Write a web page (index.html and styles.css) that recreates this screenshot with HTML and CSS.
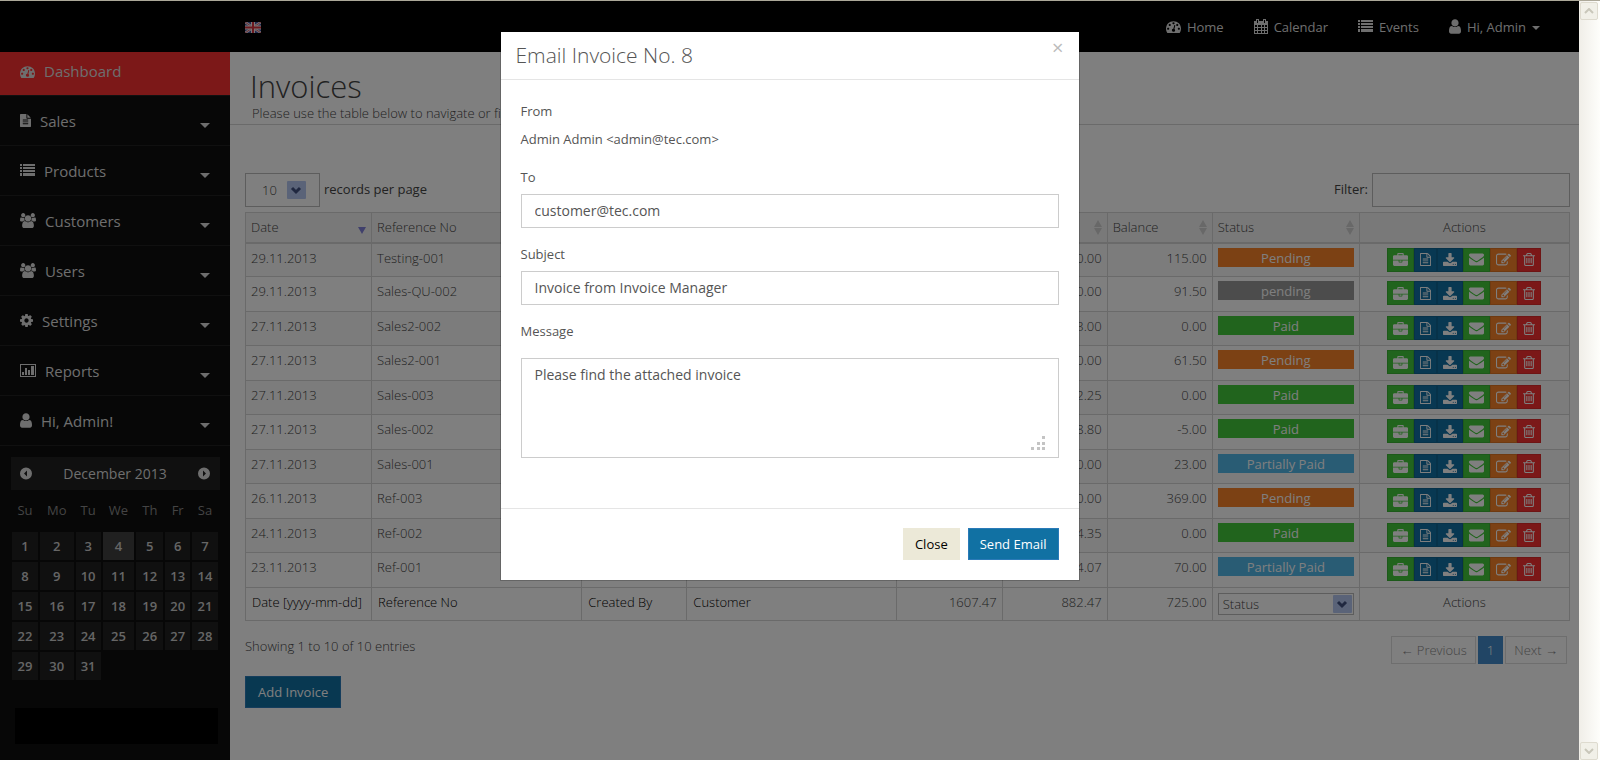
FILE: index.html
```html
<!DOCTYPE html>
<html lang="en">
<head>
    <meta charset="UTF-8">
    <meta name="viewport" content="width=device-width, initial-scale=1.0">
    <title>Invoices - Invoice Manager</title>
    <link rel="stylesheet" href="styles.css">
</head>
<body>

    <!-- Icon set -->
    <svg class="sprite" aria-hidden="true">
        <symbol id="i-dashboard" viewBox="0 0 1792 1792"><path d="M384 1152q0-53-37.500-90.500t-90.500-37.500-90.500 37.500-37.500 90.500 37.500 90.500 90.500 37.500 90.500-37.500 37.500-90.500zm192-448q0-53-37.500-90.500t-90.500-37.500-90.500 37.500-37.500 90.500 37.500 90.500 90.500 37.500 90.500-37.500 37.500-90.500zm428 481l101-382q6-26-7.500-48.500t-38.500-29.500-48 6.500-30 39.500l-101 382q-60 5-107 43.500t-63 98.500q-20 77 20 146t117 89 146-20 89-117q16-60-6-117t-72-91zm660-33q0-53-37.500-90.500t-90.500-37.500-90.500 37.500-37.500 90.500 37.500 90.500 90.500 37.500 90.500-37.500 37.500-90.500zm-640-640q0-53-37.500-90.500t-90.500-37.500-90.500 37.500-37.500 90.500 37.500 90.500 90.500 37.500 90.500-37.500 37.500-90.500zm448 192q0-53-37.500-90.500t-90.500-37.500-90.500 37.500-37.500 90.500 37.500 90.500 90.500 37.500 90.500-37.500 37.500-90.500zm320 448q0 261-141 483-19 29-54 29h-1402q-35 0-54-29-141-221-141-483 0-182 71-348t191-286 286-191 348-71 348 71 286 191 191 286 71 348z"/></symbol>
        <symbol id="i-file" viewBox="128 0 1536 1792"><path d="M1596 476q14 14 28 36h-472v-472q22 14 36 28zm-476 164h544v1056q0 40-28 68t-68 28h-1344q-40 0-68-28t-28-68v-1600q0-40 28-68t68-28h800v544q0 40 28 68t68 28zm160 736v-64q0-14-9-23t-23-9h-704q-14 0-23 9t-9 23v64q0 14 9 23t23 9h704q14 0 23-9t9-23zm0-256v-64q0-14-9-23t-23-9h-704q-14 0-23 9t-9 23v64q0 14 9 23t23 9h704q14 0 23-9t9-23zm0-256v-64q0-14-9-23t-23-9h-704q-14 0-23 9t-9 23v64q0 14 9 23t23 9h704q14 0 23-9t9-23z"/></symbol>
        <symbol id="i-file-o" viewBox="128 0 1536 1792"><path d="M1596 380q28 28 48 76t20 88v1152q0 40-28 68t-68 28h-1344q-40 0-68-28t-28-68v-1600q0-40 28-68t68-28h896q40 0 88 20t76 48zm-444-244v376h376q-10-29-22-41l-313-313q-12-12-41-22zm384 1528v-1024h-416q-40 0-68-28t-28-68v-416h-768v1536h1280zm-1024-864q0-14 9-23t23-9h704q14 0 23 9t9 23v64q0 14-9 23t-23 9h-704q-14 0-23-9t-9-23v-64zm736 224q14 0 23 9t9 23v64q0 14-9 23t-23 9h-704q-14 0-23-9t-9-23v-64q0-14 9-23t23-9h704zm0 256q14 0 23 9t9 23v64q0 14-9 23t-23 9h-704q-14 0-23-9t-9-23v-64q0-14 9-23t23-9h704z"/></symbol>
        <symbol id="i-list" viewBox="0 0 15 13"><path d="M0 0h2v2H0zM3 0h12v2H3zM0 3h2v2H0zM3 3h12v2H3zM0 6h2v2H0zM3 6h12v2H3zM0 9h2v3H0zM3 9h12v3H3z"/></symbol>
        <symbol id="i-users" viewBox="0 0 1920 1792"><path d="M593 896q-162 5-265 128h-134q-82 0-138-40.500t-56-118.500q0-353 124-353 6 0 43.500 21t97.500 42.500 119 21.500q67 0 133-23-5 37-5 66 0 139 81 256zm1071 637q0 120-73 189.500t-194 69.500h-874q-121 0-194-69.500t-73-189.500q0-53 3.500-103.500t14-109 26.500-108.500 43-97.500 62-81 85.500-53.500 111.500-20q10 0 43 21.500t73 48 107 48 135 21.500 135-21.500 107-48 73-48 43-21.500q61 0 111.500 20t85.500 53.500 62 81 43 97.500 26.500 108.500 14 109 3.500 103.500zm-1024-1277q0 106-75 181t-181 75-181-75-75-181 75-181 181-75 181 75 75 181zm704 384q0 159-112.500 271.500t-271.500 112.500-271.500-112.500-112.500-271.500 112.500-271.500 271.500-112.500 271.500 112.500 112.500 271.500zm576 225q0 78-56 118.500t-138 40.500h-134q-103-123-265-128 81-117 81-256 0-29-5-66 66 23 133 23 59 0 119-21.500t97.500-42.500 43.500-21q124 0 124 353zm-128-609q0 106-75 181t-181 75-181-75-75-181 75-181 181-75 181 75 75 181z"/></symbol>
        <symbol id="i-gear" viewBox="128 128 1536 1536"><path d="M1152 896q0-106-75-181t-181-75-181 75-75 181 75 181 181 75 181-75 75-181zm512-109v222q0 12-8 23t-20 13l-185 28q-19 54-39 91 35 50 107 138 10 12 10 25t-9 23q-27 37-99 108t-94 71q-12 0-26-9l-138-108q-44 23-91 38-16 136-29 186-7 28-36 28h-222q-14 0-24.500-8.500t-11.500-21.500l-28-184q-49-16-90-37l-141 107q-10 9-25 9-14 0-25-11-126-114-165-168-7-10-7-23 0-12 8-23 15-21 51-66.500t54-70.500q-27-50-41-99l-183-27q-13-2-21-12.500t-8-23.500v-222q0-12 8-23t19-13l186-28q14-46 39-92-40-57-107-138-10-12-10-24 0-10 9-23 26-36 98.500-107.500t94.500-71.500q13 0 26 10l138 107q44-23 91-38 16-136 29-186 7-28 36-28h222q14 0 24.500 8.500t11.500 21.500l28 184q49 16 90 37l142-107q9-9 24-9 13 0 25 10 129 119 165 170 7 8 7 22 0 12-8 23-15 21-51 66.500t-54 70.500q26 50 41 98l183 28q13 2 21 12.500t8 23.500z"/></symbol>
        <symbol id="i-chart" viewBox="0 0 16 13"><path d="M0 0h16v13H0zM1 1v11h14V1z" fill-rule="evenodd"/><path d="M2 8h2v3H2zM5 4h2v7H5zM8 6h2v5H8zM11 2h3v9h-3z"/></symbol>
        <symbol id="i-user" viewBox="256 128 1280 1536"><path d="M1536 1399q0 109-62.500 187t-150.500 78h-854q-88 0-150.500-78t-62.500-187q0-85 8.500-160.500t31.500-152 58.500-131 94-89 134.500-34.500q131 128 313 128t313-128q76 0 134.500 34.500t94 89 58.500 131 31.500 152 8.500 160.500zm-256-887q0 159-112.500 271.500t-271.500 112.500-271.500-112.500-112.500-271.500 112.500-271.500 271.500-112.500 271.500 112.500 112.500 271.500z"/></symbol>
        <symbol id="i-calendar" viewBox="0 0 14 15"><path d="M0 2h2V0h3v2h4V0h3v2h2v13H0zM1 6v2h2V6zM4 6v2h3V6zM8 6v2h2V6zM11 6v2h2V6zM1 9v2h2V9zM4 9v2h3V9zM8 9v2h2V9zM11 9v2h2V9zM1 12v2h2v-2zM4 12v2h3v-2zM8 12v2h2v-2zM11 12v2h2v-2zM3 1v3h1V1zM10 1v3h1V1z" fill-rule="evenodd"/></symbol>
        <symbol id="i-prev" viewBox="0 0 12 12"><path d="M6 0a6 6 0 1 0 0 12a6 6 0 0 0 0-12zM7 3v6L4 6z" fill-rule="evenodd"/></symbol>
        <symbol id="i-next" viewBox="0 0 12 12"><path d="M6 0a6 6 0 1 0 0 12a6 6 0 0 0 0-12zM5 3v6l3-3z" fill-rule="evenodd"/></symbol>
        <symbol id="i-briefcase" viewBox="0 0 1792 1536"><path d="M640 256h512v-128h-512v128zm1152 640v480q0 66-47 113t-113 47h-1472q-66 0-113-47t-47-113v-480h672v160q0 26 19 45t45 19h320q26 0 45-19t19-45v-160h672zm-768 0v128h-256v-128h256zm768-480v384h-1792v-384q0-66 47-113t113-47h352v-160q0-40 28-68t68-28h576q40 0 68 28t28 68v160h352q66 0 113 47t47 113z"/></symbol>
        <symbol id="i-download" viewBox="64 0 1664 1536"><path d="M1344 1344q0-26-19-45t-45-19-45 19-19 45 19 45 45 19 45-19 19-45zm256 0q0-26-19-45t-45-19-45 19-19 45 19 45 45 19 45-19 19-45zm128-224v320q0 40-28 68t-68 28h-1472q-40 0-68-28t-28-68v-320q0-40 28-68t68-28h465l135 136q58 56 136 56t136-56l136-136h464q40 0 68 28t28 68zm-325-569q17 41-14 70l-448 448q-18 19-45 19t-45-19l-448-448q-31-29-14-70 17-39 59-39h256v-448q0-26 19-45t45-19h256q26 0 45 19t19 45v448h256q42 0 59 39z"/></symbol>
        <symbol id="i-envelope" viewBox="0 256 1792 1408"><path d="M1792 710v794q0 66-47 113t-113 47h-1472q-66 0-113-47t-47-113v-794q44 49 101 87 362 246 497 345 57 42 92.500 65.500t94.500 48 110 24.500h2q51 0 110-24.500t94.500-48 92.500-65.500q170-123 498-345 57-39 100-87zm0-294q0 79-49 151t-122 123q-376 261-468 325-10 7-42.500 31t-54 38.500-52 32.500-57.500 27-50 9h-2q-23 0-50-9t-57.500-27-52-32.500-54-38.500-42.500-31q-91-64-262-182.500t-205-142.500q-62-42-117-115.500t-55-136.500q0-78 41.500-130t118.500-52h1472q65 0 112.500 47t47.500 113z"/></symbol>
        <symbol id="i-edit" viewBox="0 128 1792 1408"><path d="M888 1184l116-116-152-152-116 116v56h96v96h56zm440-720q-16-16-33 1l-350 350q-17 17-1 33t33-1l350-350q17-17 1-33zm80 594v190q0 119-84.500 203.500t-203.500 84.500h-832q-119 0-203.500-84.500t-84.500-203.500v-832q0-119 84.500-203.500t203.500-84.500h832q63 0 117 25 15 7 18 23 3 17-9 29l-49 49q-14 14-32 8-23-6-45-6h-832q-66 0-113 47t-47 113v832q0 66 47 113t113 47h832q66 0 113-47t47-113v-126q0-13 9-22l64-64q15-15 35-7t20 29zm-96-738l288 288-672 672h-288v-288zm444 132l-92 92-288-288 92-92q28-28 68-28t68 28l152 152q28 28 28 68t-28 68z"/></symbol>
        <symbol id="i-trash" viewBox="192 128 1408 1536"><path d="M704 736v576q0 14-9 23t-23 9h-64q-14 0-23-9t-9-23v-576q0-14 9-23t23-9h64q14 0 23 9t9 23zm256 0v576q0 14-9 23t-23 9h-64q-14 0-23-9t-9-23v-576q0-14 9-23t23-9h64q14 0 23 9t9 23zm256 0v576q0 14-9 23t-23 9h-64q-14 0-23-9t-9-23v-576q0-14 9-23t23-9h64q14 0 23 9t9 23zm128 724v-948h-896v948q0 22 7 40.500t14.500 27 10.500 8.500h832q3 0 10.500-8.500t14.500-27 7-40.500zm-672-1076h448l-48-117q-7-9-17-11h-317q-10 2-17 11zm928 32v64q0 14-9 23t-23 9h-96v948q0 83-47 143.500t-113 60.500h-832q-66 0-113-58.500t-47-141.500v-952h-96q-14 0-23-9t-9-23v-64q0-14 9-23t23-9h309l70-167q15-37 54-63t79-26h320q40 0 79 26t54 63l70 167h309q14 0 23 9t9 23z"/></symbol>
    </svg>

    <div class="app">
        <header class="navbar">
            <a class="flag" href="#" aria-label="English">
                <svg width="16" height="11" viewBox="0 0 16 11">
                    <rect width="16" height="11" fill="#3c4f9c"/>
                    <path d="M0 0l16 11M16 0L0 11" stroke="#f0e4e8" stroke-width="2.500"/>
                    <path d="M0 0l16 11M16 0L0 11" stroke="#d06070" stroke-width="1"/>
                    <path d="M8 0v11M0 5.500h16" stroke="#f4ecee" stroke-width="4"/>
                    <path d="M8 0v11M0 5.500h16" stroke="#d8303c" stroke-width="2"/>
                </svg>
            </a>
            <nav class="topnav">
                <a href="#"><svg class="icon w15"><use href="#i-dashboard"/></svg>Home</a>
                <a href="#"><svg class="icon w14"><use href="#i-calendar"/></svg>Calendar</a>
                <a href="#"><svg class="icon w15"><use href="#i-list"/></svg>Events</a>
                <a href="#"><svg class="icon w12"><use href="#i-user"/></svg>Hi, Admin<span class="caret small"></span></a>
            </nav>
        </header>

        <div class="layout">
            <aside class="sidebar">
                <nav class="menu">
                    <a class="active" href="#"><svg class="icon w15"><use href="#i-dashboard"/></svg>Dashboard</a>
                    <a href="#"><svg class="icon w11"><use href="#i-file"/></svg>Sales<span class="caret"></span></a>
                    <a href="#"><svg class="icon w15"><use href="#i-list"/></svg>Products<span class="caret"></span></a>
                    <a href="#"><svg class="icon w16"><use href="#i-users"/></svg>Customers<span class="caret"></span></a>
                    <a href="#"><svg class="icon w16"><use href="#i-users"/></svg>Users<span class="caret"></span></a>
                    <a href="#"><svg class="icon w13"><use href="#i-gear"/></svg>Settings<span class="caret"></span></a>
                    <a href="#"><svg class="icon w16"><use href="#i-chart"/></svg>Reports<span class="caret"></span></a>
                    <a href="#"><svg class="icon w12"><use href="#i-user"/></svg>Hi, Admin!<span class="caret"></span></a>
                </nav>

                <div class="datepicker">
                    <div class="datepicker-head">
                        <button type="button" aria-label="Previous month"><svg class="icon w12"><use href="#i-prev"/></svg></button>
                        <span>December 2013</span>
                        <button type="button" aria-label="Next month"><svg class="icon w12"><use href="#i-next"/></svg></button>
                    </div>
                    <table>
                        <thead>
                            <tr>
                                <th class="d26">Su</th>
                                <th class="d34">Mo</th>
                                <th class="d25">Tu</th>
                                <th class="d32">We</th>
                                <th class="d27">Th</th>
                                <th class="d25">Fr</th>
                                <th class="d26">Sa</th>
                            </tr>
                        </thead>
                        <tbody id="days"></tbody>
                    </table>
                </div>
                <div class="sidebox"></div>
            </aside>

            <main class="content">
                <div class="page-head">
                    <h1>Invoices</h1>
                    <p>Please use the table below to navigate or filter the results.</p>
                </div>

                <div class="table-area">
                    <div class="table-tools">
                        <label><select class="length"><option>10</option><option>25</option></select><span>records per page</span></label>
                        <label><span>Filter:</span><input class="filter" type="text"></label>
                    </div>

                    <table class="invoices">
                        <colgroup>
                            <col class="c-date"><col class="c-ref"><col class="c-num"><col class="c-ref"><col class="c-num"><col class="c-num"><col class="c-num"><col class="c-status"><col class="c-ref">
                        </colgroup>
                        <thead>
                            <tr>
                                <th><div class="th">Date<span class="sorted"></span></div></th>
                                <th><div class="th">Reference No<span class="sort"></span></div></th>
                                <th><div class="th">Created By<span class="sort"></span></div></th>
                                <th><div class="th">Customer<span class="sort"></span></div></th>
                                <th><div class="th">Total<span class="sort"></span></div></th>
                                <th><div class="th">Paid<span class="sort"></span></div></th>
                                <th><div class="th">Balance<span class="sort"></span></div></th>
                                <th><div class="th">Status<span class="sort"></span></div></th>
                                <th class="center">Actions</th>
                            </tr>
                        </thead>
                        <tbody id="rows"></tbody>
                        <tfoot>
                            <tr>
                                <td><input type="text" value="Date [yyyy-mm-dd]" aria-label="Date"></td>
                                <td><input type="text" value="Reference No" aria-label="Reference No"></td>
                                <td><input type="text" value="Created By" aria-label="Created By"></td>
                                <td><input type="text" value="Customer" aria-label="Customer"></td>
                                <td class="num">1607.47</td>
                                <td class="num">882.47</td>
                                <td class="num">725.00</td>
                                <td><select class="status-filter" aria-label="Status"><option>Status</option><option>Paid</option><option>Pending</option></select></td>
                                <td class="center">Actions</td>
                            </tr>
                        </tfoot>
                    </table>

                    <div class="table-foot">
                        <span>Showing 1 to 10 of 10 entries</span>
                        <div class="pagination">
                            <a href="#">← Previous</a>
                            <a class="current" href="#">1</a>
                            <a href="#">Next →</a>
                        </div>
                    </div>

                    <button type="button" class="btn btn-primary">Add Invoice</button>
                </div>
            </main>
        </div>

        <div class="backdrop">
            <form class="modal" role="dialog" aria-labelledby="modal-title">
                <div class="modal-header">
                    <h2 id="modal-title">Email Invoice No. 8</h2>
                    <button type="button" class="close" aria-label="Dismiss">×</button>
                </div>
                <div class="modal-body">
                    <span class="label">From</span>
                    <span class="label from">Admin Admin &lt;admin@tec.com&gt;</span>
                    <label for="to">To</label>
                    <input id="to" type="text" value="customer@tec.com">
                    <label for="subject">Subject</label>
                    <input id="subject" type="text" value="Invoice from Invoice Manager">
                    <label for="message" class="message-label">Message</label>
                    <div class="message-box">
                        <textarea id="message">Please find the attached invoice</textarea>
                        <svg class="grip" width="14" height="14" viewBox="0 0 14 14"><path d="M11 0h3v3h-3zM6 6h3v3H6zM11 6h3v3h-3zM0 11h3v3H0zM6 11h3v3H6zM11 11h3v3h-3z"/></svg>
                    </div>
                </div>
                <div class="modal-footer">
                    <button type="button" class="btn btn-close">Close</button>
                    <button type="button" class="btn btn-primary">Send Email</button>
                </div>
            </form>
        </div>
    </div>

    <div class="scrollbar">
        <span class="scroll-btn"><svg width="10" height="6" viewBox="0 0 10 6"><path d="M1 5l4-4 4 4"/></svg></span>
        <span class="scroll-btn"><svg width="10" height="6" viewBox="0 0 10 6"><path d="M1 1l4 4 4-4"/></svg></span>
    </div>

    <script>
        // date, reference, paid, balance, status
        const invoices = [
            ["29.11.2013", "Testing-001", 0, 115, "Pending"],
            ["29.11.2013", "Sales-QU-002", 0, 91.5, "pending"],
            ["27.11.2013", "Sales2-002", 573, 0, "Paid"],
            ["27.11.2013", "Sales2-001", 0, 61.5, "Pending"],
            ["27.11.2013", "Sales-003", 62.25, 0, "Paid"],
            ["27.11.2013", "Sales-002", 58.8, -5, "Paid"],
            ["27.11.2013", "Sales-001", 0, 23, "Partially Paid"],
            ["26.11.2013", "Ref-003", 0, 369, "Pending"],
            ["24.11.2013", "Ref-002", 154.35, 0, "Paid"],
            ["23.11.2013", "Ref-001", 34.07, 70, "Partially Paid"]
        ];

        const statusClass = {
            "Pending": "orange",
            "pending": "grey",
            "Paid": "green",
            "Partially Paid": "sky"
        };

        const actions = [
            ["View", "briefcase", "green", "w15"],
            ["Details", "file-o", "blue", "w11"],
            ["Download", "download", "blue", "w14"],
            ["Email", "envelope", "green", "w15"],
            ["Edit", "edit", "orange", "w15"],
            ["Delete", "trash", "red", "w12"]
        ];

        const buttons = actions.map(([title, icon, color, width]) =>
            `<button type="button" class="${color}" title="${title}"><svg class="icon ${width}"><use href="#i-${icon}"/></svg></button>`
        ).join("");

        document.getElementById("rows").innerHTML = invoices.map(([date, ref, paid, balance, status]) => `
            <tr>
                <td>${date}</td>
                <td>${ref}</td>
                <td>Admin</td>
                <td>Customer</td>
                <td class="num">${(paid + balance).toFixed(2)}</td>
                <td class="num">${paid.toFixed(2)}</td>
                <td class="num">${balance.toFixed(2)}</td>
                <td><span class="status ${statusClass[status]}">${status}</span></td>
                <td><div class="actions">${buttons}</div></td>
            </tr>`).join("");

        // December 2013 starts on a Sunday
        let days = "";
        for (let start = 1; start <= 31; start += 7) {
            days += "<tr>";
            for (let day = start; day < start + 7 && day <= 31; day++) {
                days += `<td class="${day === 4 ? "today" : ""}">${day}</td>`;
            }
            days += "</tr>";
        }
        document.getElementById("days").innerHTML = days;
    </script>

</body>
</html>
```
FILE: styles.css
```css
* {
    box-sizing: border-box;
}

body {
    margin: 0;
    min-height: 100vh;
    display: flex;
    border-top: 1px solid #aca899;
    font-family: "Open Sans", Arial, sans-serif;
    font-size: 13px;
    font-weight: 300;
    line-height: 20px;
    color: #444;
}

a {
    color: inherit;
    text-decoration: none;
}

button, input, select, textarea {
    font: inherit;
    color: inherit;
    border-radius: 0;
    margin: 0;
}

button {
    cursor: pointer;
}

h1, h2, p {
    margin: 0;
    font-weight: 300;
}

.sprite {
    position: absolute;
    width: 0;
    height: 0;
}

.icon {
    height: 15px;
    fill: currentColor;
    flex: none;
    display: block;
}

.w11 { width: 11px; }
.w12 { width: 12px; }
.w13 { width: 13px; }
.w14 { width: 14px; }
.w15 { width: 15px; }
.w16 { width: 16px; }

.app {
    position: relative;
    flex: 1;
    min-width: 0;
    display: flex;
    flex-direction: column;
    background: #fff;
}

/* Top bar */
.navbar {
    height: 51px;
    background: #000;
    display: flex;
    align-items: center;
    justify-content: space-between;
    padding: 0 39px 0 245px;
    color: #fff;
}

.flag svg {
    display: block;
    margin-top: 2px;
}

.topnav {
    display: flex;
    gap: 30px;
    font-weight: 400;
    color: #ddd;
}

.topnav a {
    display: flex;
    align-items: center;
    gap: 6px;
}

.caret {
    margin-left: auto;
    border: 5px solid transparent;
    border-top-color: currentColor;
    border-bottom: 0;
}

.caret.small {
    border-width: 4px 4px 0;
    margin: 3px 0 0;
}

/* Sidebar */
.layout {
    flex: 1;
    display: flex;
}

.sidebar {
    width: 230px;
    flex: none;
    background: #0e0e0e;
}

.menu a {
    display: flex;
    align-items: center;
    gap: 9px;
    height: 50px;
    padding: 0 20px;
    border-bottom: 1px solid #202020;
    font-size: 15px;
    font-weight: 400;
    color: #ddd;
}

.menu a.active {
    height: 44px;
    padding-bottom: 5px;
    border-bottom-color: #202020;
    background: #f83030;
}

.menu .caret {
    margin-top: 10px;
}

.datepicker {
    margin: 11px 10px 0;
}

.datepicker-head {
    height: 33px;
    margin-left: 1px;
    padding: 0 10px 0 9px;
    background: #202020;
    display: flex;
    align-items: center;
    justify-content: space-between;
    font-size: 14px;
    font-weight: 400;
    color: #ddd;
}

.datepicker-head button {
    padding: 0;
    border: 0;
    background: none;
}

.datepicker table {
    width: 100%;
    border-spacing: 2px;
    text-align: center;
}

.datepicker th {
    height: 38px;
    padding: 0 0 2px;
    font-weight: 400;
    color: #888;
}

.datepicker td {
    height: 28px;
    padding: 0;
    background: #202020;
    font-weight: 600;
    color: #ccc;
}

.datepicker td.today {
    background: #404040;
}

.d25 { width: 25px; }
.d26 { width: 26px; }
.d27 { width: 27px; }
.d32 { width: 32px; }
.d34 { width: 34px; }

.sidebox {
    height: 36px;
    margin: 26px 12px 14px 15px;
    background: #000;
}

/* Content */
.content {
    flex: 1;
    min-width: 0;
}

.page-head {
    padding: 18px 20px 0;
    height: 73px;
    border-bottom: 1px solid #d4d4d4;
}

.page-head h1 {
    font-size: 31px;
    line-height: 32px;
}

.page-head p {
    padding: 1px 2px 0;
}

.table-area {
    padding: 48px 9px 0 15px;
}

.table-tools {
    display: flex;
    justify-content: space-between;
    margin-bottom: 5px;
    font-weight: 400;
}

.table-tools label {
    display: flex;
    align-items: center;
    gap: 4px;
}

.table-tools span {
    margin-bottom: 3px;
}

.table-tools select,
.table-tools input {
    height: 34px;
    border: 1px solid #bbb;
    background-color: #fff;
    font-weight: 300;
}

select {
    appearance: none;
    background: #fff url("data:image/svg+xml,%3Csvg xmlns='http://www.w3.org/2000/svg' width='19' height='18'%3E%3Crect width='19' height='18' rx='1' fill='%23b4c6f0'/%3E%3Cpath d='M5 7l4 4 4-4' fill='none' stroke='%23405080' stroke-width='3'/%3E%3C/svg%3E") no-repeat;
}

.length {
    width: 75px;
    padding: 0 16px;
    background-position: right 13px center;
}

.filter {
    width: 198px;
    padding: 0 12px;
}

.invoices {
    width: 100%;
    table-layout: fixed;
    border-collapse: collapse;
    border: 1px solid #d4d4d4;
}

.c-date { width: 126px; }
.c-ref { width: 210px; }
.c-num { width: 105px; }
.c-status { width: 147px; }

.invoices th,
.invoices td {
    padding: 4px 5px 5px;
    border: 1px solid #d4d4d4;
    text-align: left;
    vertical-align: top;
    white-space: nowrap;
    overflow: hidden;
}

.invoices thead th {
    height: 30px;
    padding-bottom: 4px;
    border-bottom: 2px solid #d4d4d4;
    background: #f3f3f3;
    font-weight: 300;
}

.invoices .th {
    display: flex;
    justify-content: space-between;
    align-items: center;
}

.sort, .sorted {
    display: flex;
    flex-direction: column;
    gap: 1px;
}

.sort::before,
.sort::after,
.sorted::after {
    content: "";
    border: 4px solid transparent;
}

.sort::before {
    border-width: 0 4px 7px;
    border-bottom-color: #d0d0d0;
}

.sort::after {
    border-width: 7px 4px 0;
    border-top-color: #d0d0d0;
}

.sorted::after {
    border-width: 7px 4px 0;
    border-top-color: #8080d8;
    margin-top: 6px;
}

.invoices tbody tr:nth-child(odd) { height: 34px; background: #f9f9f9; }
.invoices tbody tr:nth-child(even) { height: 35px; }

.invoices tbody td:nth-child(n+8) {
    padding-bottom: 0;
}

.invoices .num {
    text-align: right;
}

.invoices .center {
    text-align: center;
}

.invoices tfoot td {
    height: 33px;
}

.invoices tfoot input {
    display: block;
    width: 100%;
    height: 20px;
    padding: 0 1px;
    border: 0;
    background: none;
    color: #000;
}

.status-filter {
    display: block;
    width: 100%;
    height: 22px;
    margin-top: 1px;
    padding: 0 4px;
    border: 1px solid #bbb;
    background-position: right 1px center;
}

.status {
    display: block;
    height: 19px;
    line-height: 20px;
    text-align: center;
    color: #fff;
    font-weight: 400;
}

.green { background: #42c83a; }
.orange { background: #f88228; }
.blue { background: #1070a4; }
.red { background: #f63030; }
.sky { background: #52b8e8; }
.grey { background: #999; }

.actions {
    display: flex;
    justify-content: center;
}

.actions button {
    height: 24px;
    padding: 0 5px;
    border: 1px solid rgba(0, 0, 0, 0.1);
    color: #fff;
}

.actions .icon {
    height: 13px;
}

.table-foot {
    display: flex;
    justify-content: space-between;
    padding: 15px 3px 12px 0;
}

.pagination {
    display: flex;
    gap: 2px;
}

.pagination a {
    padding: 3px 8px;
    border: 1px solid #ddd;
    color: #888;
}

.pagination a.current {
    border-color: #428bca;
    background: #428bca;
    color: #fff;
}

.btn {
    height: 32px;
    padding: 0 12px;
    border: 1px solid transparent;
    font-weight: 400;
}

.btn-primary {
    background: #1171a3;
    border-color: #2a7ab8;
    color: #fff;
}

.btn-close {
    background: #ece9d8;
    color: #000;
}

/* Email dialog */
.backdrop {
    position: absolute;
    inset: 0;
    background: rgba(0, 0, 0, 0.5);
    display: flex;
    justify-content: center;
    align-items: flex-start;
    padding: 31px 20px;
}

.modal {
    width: 578px;
    background: #fff;
    box-shadow: 0 0 0 1px rgba(0, 0, 0, 0.2);
    color: #555;
}

.modal-header {
    display: flex;
    justify-content: space-between;
    align-items: flex-start;
    padding: 8px 15px;
    border-bottom: 1px solid #e5e5e5;
}

.modal-header h2 {
    font-size: 21px;
    line-height: 31px;
}

.close {
    padding: 0;
    border: 0;
    background: none;
    font-size: 20px;
    font-weight: 400;
    line-height: 16px;
    color: #bbb;
}

.modal-body {
    display: flex;
    flex-direction: column;
    padding: 21px 20px 50px;
}

.modal-body label,
.modal-body .label {
    font-weight: 400;
    margin-bottom: 7px;
}

.modal-body .from {
    margin: 1px 0 18px;
}

.modal-body input,
.modal-body textarea {
    width: 100%;
    height: 34px;
    padding: 5px 13px 7px;
    border: 1px solid #ccc;
    background: #fff;
    font-size: 14px;
    font-weight: 400;
}

.modal-body input {
    margin-bottom: 16px;
}

.modal-body .message-label {
    margin-bottom: 17px;
}

.message-box {
    position: relative;
}

.modal-body textarea {
    display: block;
    height: 100px;
    padding-top: 6px;
    resize: none;
}

.grip {
    position: absolute;
    right: 14px;
    bottom: 8px;
    fill: #c4c4c4;
}

.modal-footer {
    display: flex;
    justify-content: flex-end;
    gap: 8px;
    padding: 19px 20px 20px;
    border-top: 1px solid #e5e5e5;
}

.modal-footer .btn {
    padding: 0 11px;
}

/* Window scrollbar */
.scrollbar {
    width: 21px;
    flex: none;
    padding: 1px 2px 0 1px;
    background: linear-gradient(to right, #f0eee8, #fefefb);
    display: flex;
    flex-direction: column;
    justify-content: space-between;
}

.scroll-btn {
    height: 18px;
    border: 1px solid #dedbcf;
    border-radius: 2px;
    background: #f1f0e8;
    display: flex;
    align-items: center;
    justify-content: center;
}

.scroll-btn path {
    fill: none;
    stroke: #c9c7ba;
    stroke-width: 2;
}
```
